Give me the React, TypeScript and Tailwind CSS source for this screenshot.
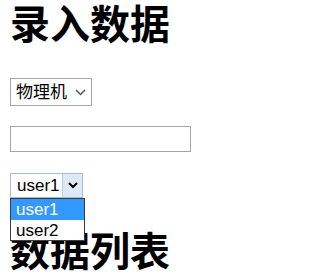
import React from "react";

const font = { fontFamily: '"Liberation Sans", "Noto Sans CJK SC", sans-serif' };

export default function App() {
  return (
    <div className="bg-white w-[221px] h-[279px] overflow-hidden pl-[10px] text-black font-['Liberation_Sans','Noto_Sans_CJK_SC',sans-serif]">
      <h1 className="text-[40px] leading-[40px] font-bold h-[40px] mt-[5px] whitespace-nowrap">录入数据</h1>
      <div className="mt-[33px] h-[28px] w-[82px] border border-[#a6a6a6] flex items-center justify-between pl-[5px] pr-[4px] text-[17px] leading-none">
        <span>物理机</span>
        <svg width="11" height="7" viewBox="0 0 11 7" className="mr-[1px]">
          <path d="M1 1 L5.5 5.5 L10 1" fill="none" stroke="#555" strokeWidth="1.5" />
        </svg>
      </div>
      <div className="mt-[20px] h-[26px] w-[181px] border border-[#a6a6a6]" />
      <div className="relative mt-[21px] w-[73px] h-[25px]">
        <div className="h-full w-full border border-[#a7bcd6] flex items-stretch text-[17px] leading-none">
          <span className="flex-1 flex items-center pl-[6px]">user1</span>
          <span className="w-[20px] bg-[#dce9f7] border-l border-[#b9cde5] flex items-center justify-center">
            <svg width="10" height="7" viewBox="0 0 10 7">
              <path d="M1 1 L5 5 L9 1" fill="none" stroke="#000" strokeWidth="2" />
            </svg>
          </span>
        </div>
        <div className="absolute left-0 top-[25px] w-[75px] h-[43px] border border-[#3c3c3c] bg-white z-10 text-[17px] leading-none">
          <div className="h-[21px] bg-[#3399ff] text-white flex items-center pl-[5px]">user1</div>
          <div className="h-[20px] flex items-center pl-[5px]">user2</div>
        </div>
      </div>
      <h2 className="text-[40px] leading-[40px] font-bold h-[40px] mt-[34px] whitespace-nowrap">数据列表</h2>
    </div>
  );
}
